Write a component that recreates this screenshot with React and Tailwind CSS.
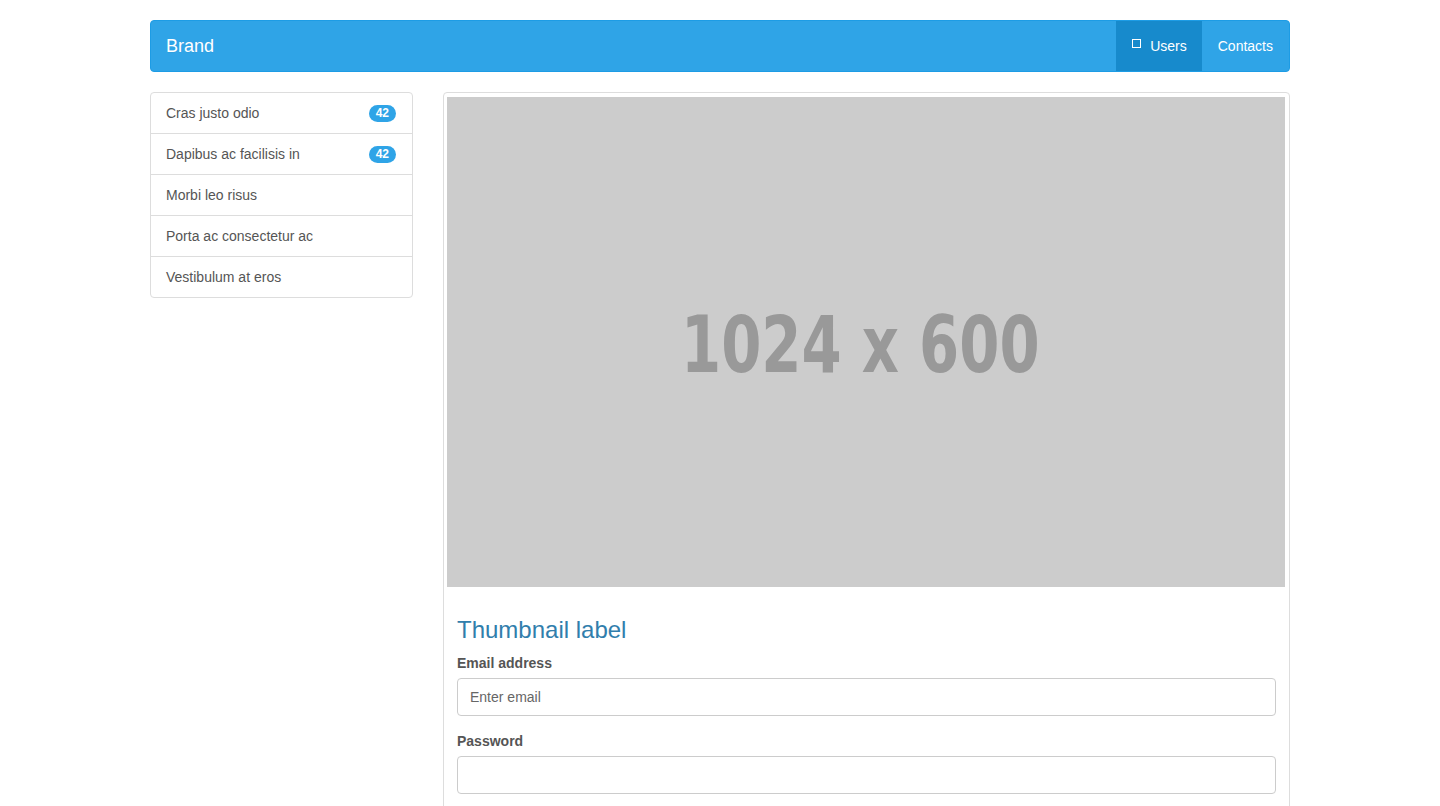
import React from 'react';

const items = [
    { label: "Cras justo odio", badge: 42 },
    { label: "Dapibus ac facilisis in", badge: 42 },
    { label: "Morbi leo risus" },
    { label: "Porta ac consectetur ac" },
    { label: "Vestibulum at eros" },
];

function Navbar() {
    return (
        <nav className="h-[52px] flex items-stretch justify-between bg-[#2fa4e7] border border-[#1d9ce5] rounded-[4px] overflow-hidden">
            {/* Brand */}
            <a href="#" className="flex items-center px-[15px] text-[18px] text-white [text-shadow:0_1px_0_rgba(0,0,0,0.05)]">
                Brand
            </a>

            {/* Nav links */}
            <ul className="flex items-stretch text-[14px] text-white">
                <li className="flex items-center gap-[9px] pl-[16px] pr-[15px] bg-[#178acc]">
                    <span className="w-[9px] h-[9px] border-[1.5px] border-white -mt-[6px]"></span>
                    <span>Users</span>
                </li>
                <li className="flex items-center pl-[16px] pr-[16px]">Contacts</li>
            </ul>
        </nav>
    );
}

function Sidebar() {
    return (
        <ul className="w-[263px] shrink-0 self-start border border-[#dddddd] rounded-[4px] bg-white">
            {items.map((item, i) => (
                <li
                    key={item.label}
                    className={`flex items-center justify-between px-[15px] text-[14px] text-[#555555] ${i > 0 ? 'h-[41px] border-t border-[#dddddd]' : 'h-[40px]'}`}
                >
                    <span>{item.label}</span>
                    {item.badge && (
                        <span className="min-w-[27px] h-[17px] px-[7px] mr-[1px] flex items-center justify-center rounded-full bg-[#2fa4e7] text-white text-[12px] font-bold leading-none">
                            {item.badge}
                        </span>
                    )}
                </li>
            ))}
        </ul>
    );
}

function Thumbnail() {
    return (
        <div className="flex-1 border border-[#dddddd] rounded-[4px] py-[4px] pl-[3px] pr-[4px] bg-white">
            {/* Placeholder image */}
            <div className="h-[490px] bg-[#cccccc] flex items-center justify-center overflow-hidden">
                <span className="text-[78px] font-bold text-[#999999] whitespace-nowrap font-['DejaVu_Sans',sans-serif] scale-x-[0.74] translate-y-[3px] -translate-x-[6px]">
                    1024 x 600
                </span>
            </div>

            {/* Caption */}
            <div className="py-[9px] pl-[10px] pr-[9px] text-[#555555]">
                <h3 className="mt-[21px] mb-[10px] text-[24px] leading-[26px] text-[#317eac]">Thumbnail label</h3>
                <form>
                    <div className="mb-[15px]">
                        <label className="block mb-[5px] text-[14px] leading-[20px] font-bold">Email address</label>
                        <input
                            type="email"
                            placeholder="Enter email"
                            className="block w-full h-[38px] px-[12px] text-[14px] border border-[#cccccc] rounded-[4px] placeholder:text-[#666666] outline-none"
                        />
                    </div>
                    <div className="mb-[15px]">
                        <label className="block mb-[5px] text-[14px] leading-[20px] font-bold">Password</label>
                        <input
                            type="password"
                            className="block w-full h-[38px] px-[12px] text-[14px] border border-[#cccccc] rounded-[4px] outline-none"
                        />
                    </div>
                </form>
            </div>
        </div>
    );
}

export default function App() {
    return (
        <div className="min-h-screen bg-white font-['Liberation_Sans',Arial,sans-serif]">
            <div className="w-[1140px] mx-auto pt-[20px]">
                <Navbar />
                <div className="mt-[20px] flex gap-[30px]">
                    <Sidebar />
                    <Thumbnail />
                </div>
            </div>
        </div>
    );
}
